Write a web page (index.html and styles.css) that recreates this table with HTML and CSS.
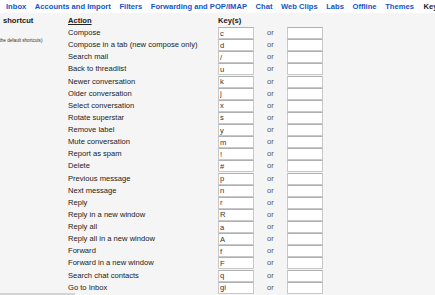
FILE: index.html
```html
<!DOCTYPE html>
<html lang="en">
<head>
    <meta charset="UTF-8">
    <title>Settings - Keyboard Shortcuts</title>
    <link rel="stylesheet" href="styles.css">
</head>
<body>
    <nav class="tabs">
        <a href="#">Inbox</a>
        <a href="#">Accounts and Import</a>
        <a href="#">Filters</a>
        <a href="#">Forwarding and POP/IMAP</a>
        <a href="#">Chat</a>
        <a href="#">Web Clips</a>
        <a href="#">Labs</a>
        <a href="#">Offline</a>
        <a href="#">Themes</a>
        <span class="current">Keyboard Shortcuts</span>
    </nav>

    <main class="settings">
        <aside class="side">
            <div class="side-title">shortcut</div>
            <div class="side-note">(the default shortcuts)</div>
        </aside>
        <div class="shortcuts" id="shortcuts">
            <div class="head">Action</div>
            <div class="head key-head">Key(s)</div>
        </div>
    </main>

    <div class="scroll-thumb"></div>

    <script>
        const shortcuts = [
            ["Compose", "c"],
            ["Compose in a tab (new compose only)", "d"],
            ["Search mail", "/"],
            ["Back to threadlist", "u"],
            ["Newer conversation", "k"],
            ["Older conversation", "j"],
            ["Select conversation", "x"],
            ["Rotate superstar", "s"],
            ["Remove label", "y"],
            ["Mute conversation", "m"],
            ["Report as spam", "!"],
            ["Delete", "#"],
            ["Previous message", "p"],
            ["Next message", "n"],
            ["Reply", "r"],
            ["Reply in a new window", "R"],
            ["Reply all", "a"],
            ["Reply all in a new window", "A"],
            ["Forward", "f"],
            ["Forward in a new window", "F"],
            ["Search chat contacts", "q"],
            ["Go to Inbox", "gi"]
        ];

        const list = document.getElementById("shortcuts");
        shortcuts.forEach(([action, key]) => {
            list.insertAdjacentHTML("beforeend", `
                <div class="action">${action}</div>
                <input class="key" type="text" value="${key}">
                <div class="or">or</div>
                <input class="key" type="text" value="">
            `);
        });
    </script>
</body>
</html>
```

FILE: styles.css
```css
body {
    margin: 0;
    background: #f5f5f5;
    font-family: "Liberation Sans", Arial, sans-serif;
    color: #222;
    overflow: hidden;
}

.tabs {
    display: flex;
    gap: 8.6px;
    height: 13px;
    align-items: center;
    padding: 0 0 0 6px;
    background: #fff;
    white-space: nowrap;
    font-size: 7.6px;
    font-weight: bold;
}

.tabs a {
    color: #15c;
    text-decoration: none;
}

.tabs .current {
    color: #222;
    padding-left: 1px;
}

.settings {
    display: flex;
    padding-top: 4px;
}

.side {
    width: 68px;
    flex-shrink: 0;
}

.side-title {
    padding-left: 3px;
    font-size: 7.6px;
    font-weight: bold;
    line-height: 8px;
}

.side-note {
    margin-top: 13px;
    margin-left: -2px;
    font-size: 4.6px;
    color: #333;
}

.shortcuts {
    display: grid;
    grid-template-columns: 150px 36px 33px 36px;
    grid-template-rows: 10px;
    grid-auto-rows: 12.14px;
    font-size: 7.6px;
}

.head {
    font-weight: bold;
    text-decoration: underline;
    line-height: 8px;
    grid-column: 1 / 2;
}

.key-head {
    grid-column: 2 / 5;
    text-decoration: none;
}

.action {
    line-height: 12px;
    color: #222;
}

.key {
    box-sizing: border-box;
    width: 36px;
    height: 12px;
    margin: 0;
    padding: 0 1px;
    border: 1px solid #c8c8c8;
    border-top-color: #b0b0b0;
    background: #fff;
    font-family: "Liberation Sans", Arial, sans-serif;
    font-size: 7.6px;
    color: #333;
}

.or {
    text-align: center;
    line-height: 12px;
    color: #555;
}

.scroll-thumb {
    position: fixed;
    left: 0;
    bottom: 0;
    width: 75px;
    height: 2px;
    background: #d4d4d4;
}
```
